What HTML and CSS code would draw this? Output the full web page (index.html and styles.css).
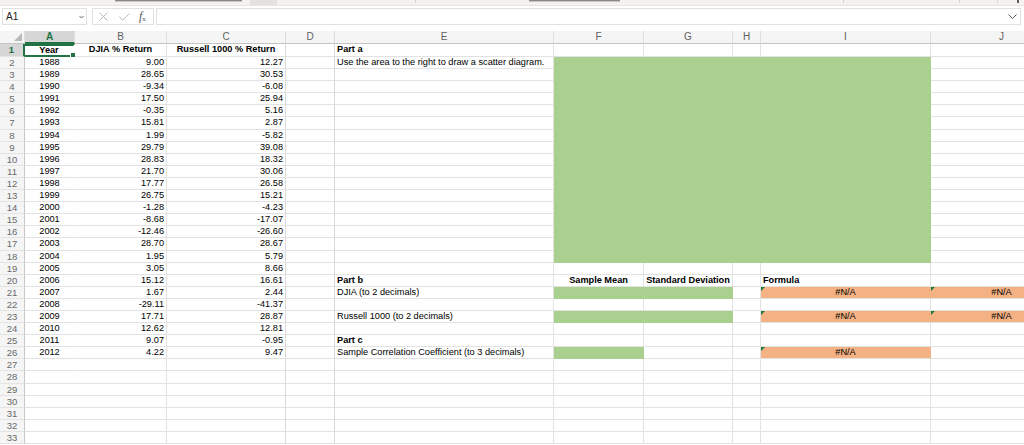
FILE: index.html
```html
<!doctype html>
<html>
<head>
<title>Book1</title>
<meta name=viewport content="width=device-width, initial-scale=1">
<link rel="stylesheet" href="styles.css">
</head>
<body>

<div class="edge">
    <span class="thumb t1"></span>
    <span class="tab"></span>
    <span class="sep s1"></span>
    <span class="thumb t2"></span>
    <span class="sep s2"></span>
    <span class="sep s3"></span>
    <span class="sep s4"></span>
    <span class="mark"></span>
</div>

<div class="fbar">
    <div class="namebox">A1
        <svg width="5" height="4" viewBox="0 0 5 4"><path d="M0.5 1 L2.5 3 L4.5 1" fill="none" stroke="#555" stroke-width="0.9"/></svg>
    </div>
    <div class="tools">
        <svg class="x" width="9" height="9" viewBox="0 0 9 9"><path d="M0.5 0.5 L8.5 8.5 M8.5 0.5 L0.5 8.5" stroke="#b3b3b3" stroke-width="0.9"/></svg>
        <svg class="ok" width="11" height="8" viewBox="0 0 11 8"><path d="M0.5 3.5 L3.5 7.3 L10.5 0.5" fill="none" stroke="#b3b3b3" stroke-width="0.9"/></svg>
        <span class="fx"><i>f</i><sub>x</sub></span>
    </div>
    <div class="finput">
        <svg width="9" height="5" viewBox="0 0 9 5"><path d="M0.5 0.5 L4.5 4.5 L8.5 0.5" fill="none" stroke="#444" stroke-width="0.9"/></svg>
    </div>
</div>

<div class="sheet">
<div class="row hdr"><div class="corner"><span></span></div><div class="sel">A</div><div>B</div><div>C</div><div>D</div><div>E</div><div>F</div><div>G</div><div>H</div><div>I</div><div>J</div></div>
<div class="row r1"><div class="rh sel">1</div><div class="c b a1">Year</div><div class="c b">DJIA % Return</div><div class="c b">Russell 1000 % Return</div><div></div><div class="b">Part a</div><div></div><div></div><div></div><div></div><div></div></div>
<div class="row"><div class="rh">2</div><div class="c">1988</div><div class="n">9.00</div><div class="n">12.27</div><div></div><div>Use the area to the right to draw a scatter diagram.</div><div class="g"></div><div class="g"></div><div class="g"></div><div class="g"></div><div></div></div>
<div class="row"><div class="rh">3</div><div class="c">1989</div><div class="n">28.65</div><div class="n">30.53</div><div></div><div></div><div class="g"></div><div class="g"></div><div class="g"></div><div class="g"></div><div></div></div>
<div class="row"><div class="rh">4</div><div class="c">1990</div><div class="n">-9.34</div><div class="n">-6.08</div><div></div><div></div><div class="g"></div><div class="g"></div><div class="g"></div><div class="g"></div><div></div></div>
<div class="row"><div class="rh">5</div><div class="c">1991</div><div class="n">17.50</div><div class="n">25.94</div><div></div><div></div><div class="g"></div><div class="g"></div><div class="g"></div><div class="g"></div><div></div></div>
<div class="row"><div class="rh">6</div><div class="c">1992</div><div class="n">-0.35</div><div class="n">5.16</div><div></div><div></div><div class="g"></div><div class="g"></div><div class="g"></div><div class="g"></div><div></div></div>
<div class="row"><div class="rh">7</div><div class="c">1993</div><div class="n">15.81</div><div class="n">2.87</div><div></div><div></div><div class="g"></div><div class="g"></div><div class="g"></div><div class="g"></div><div></div></div>
<div class="row"><div class="rh">8</div><div class="c">1994</div><div class="n">1.99</div><div class="n">-5.82</div><div></div><div></div><div class="g"></div><div class="g"></div><div class="g"></div><div class="g"></div><div></div></div>
<div class="row"><div class="rh">9</div><div class="c">1995</div><div class="n">29.79</div><div class="n">39.08</div><div></div><div></div><div class="g"></div><div class="g"></div><div class="g"></div><div class="g"></div><div></div></div>
<div class="row"><div class="rh">10</div><div class="c">1996</div><div class="n">28.83</div><div class="n">18.32</div><div></div><div></div><div class="g"></div><div class="g"></div><div class="g"></div><div class="g"></div><div></div></div>
<div class="row"><div class="rh">11</div><div class="c">1997</div><div class="n">21.70</div><div class="n">30.06</div><div></div><div></div><div class="g"></div><div class="g"></div><div class="g"></div><div class="g"></div><div></div></div>
<div class="row"><div class="rh">12</div><div class="c">1998</div><div class="n">17.77</div><div class="n">26.58</div><div></div><div></div><div class="g"></div><div class="g"></div><div class="g"></div><div class="g"></div><div></div></div>
<div class="row"><div class="rh">13</div><div class="c">1999</div><div class="n">26.75</div><div class="n">15.21</div><div></div><div></div><div class="g"></div><div class="g"></div><div class="g"></div><div class="g"></div><div></div></div>
<div class="row"><div class="rh">14</div><div class="c">2000</div><div class="n">-1.28</div><div class="n">-4.23</div><div></div><div></div><div class="g"></div><div class="g"></div><div class="g"></div><div class="g"></div><div></div></div>
<div class="row"><div class="rh">15</div><div class="c">2001</div><div class="n">-8.68</div><div class="n">-17.07</div><div></div><div></div><div class="g"></div><div class="g"></div><div class="g"></div><div class="g"></div><div></div></div>
<div class="row"><div class="rh">16</div><div class="c">2002</div><div class="n">-12.46</div><div class="n">-26.60</div><div></div><div></div><div class="g"></div><div class="g"></div><div class="g"></div><div class="g"></div><div></div></div>
<div class="row"><div class="rh">17</div><div class="c">2003</div><div class="n">28.70</div><div class="n">28.67</div><div></div><div></div><div class="g"></div><div class="g"></div><div class="g"></div><div class="g"></div><div></div></div>
<div class="row"><div class="rh">18</div><div class="c">2004</div><div class="n">1.95</div><div class="n">5.79</div><div></div><div></div><div class="g"></div><div class="g"></div><div class="g"></div><div class="g"></div><div></div></div>
<div class="row"><div class="rh">19</div><div class="c">2005</div><div class="n">3.05</div><div class="n">8.66</div><div></div><div></div><div></div><div></div><div></div><div></div><div></div></div>
<div class="row"><div class="rh">20</div><div class="c">2006</div><div class="n">15.12</div><div class="n">16.61</div><div></div><div class="b">Part b</div><div class="c b">Sample Mean</div><div class="c b">Standard Deviation</div><div></div><div class="b">Formula</div><div></div></div>
<div class="row"><div class="rh">21</div><div class="c">2007</div><div class="n">1.67</div><div class="n">2.44</div><div></div><div>DJIA (to 2 decimals)</div><div class="g"></div><div class="g"></div><div></div><div class="c o">#N/A</div><div class="c o">#N/A</div></div>
<div class="row"><div class="rh">22</div><div class="c">2008</div><div class="n">-29.11</div><div class="n">-41.37</div><div></div><div></div><div></div><div></div><div></div><div></div><div></div></div>
<div class="row"><div class="rh">23</div><div class="c">2009</div><div class="n">17.71</div><div class="n">28.87</div><div></div><div>Russell 1000 (to 2 decimals)</div><div class="g"></div><div class="g"></div><div></div><div class="c o">#N/A</div><div class="c o">#N/A</div></div>
<div class="row"><div class="rh">24</div><div class="c">2010</div><div class="n">12.62</div><div class="n">12.81</div><div></div><div></div><div></div><div></div><div></div><div></div><div></div></div>
<div class="row"><div class="rh">25</div><div class="c">2011</div><div class="n">9.07</div><div class="n">-0.95</div><div></div><div class="b">Part c</div><div></div><div></div><div></div><div></div><div></div></div>
<div class="row"><div class="rh">26</div><div class="c">2012</div><div class="n">4.22</div><div class="n">9.47</div><div></div><div>Sample Correlation Coefficient (to 3 decimals)</div><div class="g"></div><div></div><div></div><div class="c o">#N/A</div><div></div></div>
<div class="row"><div class="rh">27</div><div></div><div></div><div></div><div></div><div></div><div></div><div></div><div></div><div></div><div></div></div>
<div class="row"><div class="rh">28</div><div></div><div></div><div></div><div></div><div></div><div></div><div></div><div></div><div></div><div></div></div>
<div class="row"><div class="rh">29</div><div></div><div></div><div></div><div></div><div></div><div></div><div></div><div></div><div></div><div></div></div>
<div class="row"><div class="rh">30</div><div></div><div></div><div></div><div></div><div></div><div></div><div></div><div></div><div></div><div></div></div>
<div class="row"><div class="rh">31</div><div></div><div></div><div></div><div></div><div></div><div></div><div></div><div></div><div></div><div></div></div>
<div class="row"><div class="rh">32</div><div></div><div></div><div></div><div></div><div></div><div></div><div></div><div></div><div></div><div></div></div>
<div class="row"><div class="rh">33</div><div></div><div></div><div></div><div></div><div></div><div></div><div></div><div></div><div></div><div></div></div>
</div>

</body>
</html>
```

FILE: styles.css
```css
* {
    box-sizing: border-box;
}
body {
    margin: 0;
    width: 1024px;
    height: 445px;
    overflow: hidden;
    background-color: white;
    color: black;
    font-family: "Liberation Sans", Arial, sans-serif;
}

/* ribbon edge */
.edge {
    display: flex;
    align-items: flex-start;
    height: 6px;
    background-color: #f3f2f1;
    border-bottom: 1px solid #e7e6e5;
}
.thumb {
    height: 2px;
    background-color: #8a8886;
    border-bottom: 1px solid #c8c6c4;
}
.t1 { margin-left: 115px; width: 127px; }
.t2 { margin-left: 113px; width: 91px; }
.tab {
    margin-left: 8px;
    width: 27px;
    height: 5px;
    background-color: #e4e2e0;
}
.sep {
    width: 1px;
    height: 3px;
    background-color: #d2d0ce;
}
.s1 { margin-left: 138px; }
.s2 { margin-left: 223px; }
.s3 { margin-left: 115px; }
.s4 { margin-left: 37px; }
.mark {
    margin-left: 19px;
    width: 2px;
    height: 3px;
    background-color: #605e5c;
}

/* formula bar */
.fbar {
    display: flex;
    height: 25px;
    padding: 2px 3px 6px 2px;
}
.namebox {
    width: 85px;
    border: 1px solid #e1e1e1;
    display: flex;
    align-items: center;
    justify-content: space-between;
    padding: 0 2px 0 3px;
    font-size: 10px;
    color: #222;
}
.tools {
    width: 62px;
    margin-left: 5px;
    border: 1px solid #e1e1e1;
    display: flex;
    align-items: center;
    padding-left: 6px;
}
.tools .ok { margin-left: 11px; }
.fx {
    margin-left: 9px;
    font-family: "Liberation Serif", serif;
    font-size: 12px;
    color: #555;
}
.fx sub {
    font-size: 7px;
    vertical-align: -1px;
}
.finput {
    flex: 1;
    margin-left: 2px;
    border: 1px solid #e1e1e1;
    display: flex;
    align-items: center;
    justify-content: flex-end;
    padding-right: 3px;
}

/* grid */
.sheet {
    width: 1024px;
    overflow: hidden;
}
.row {
    display: grid;
    grid-template-columns: 25px 50px 92px 119px 49px 219px 90px 89px 28px 170px 142px;
    width: 1073px;
    height: 12.1px;
}
.row.hdr, .row.r1 {
    height: 13px;
}
.row > div {
    border-right: 1px solid #e2e2e2;
    border-bottom: 1px solid #e2e2e2;
    padding: 0 2px;
    font-size: 9.2px;
    line-height: 11px;
    white-space: nowrap;
    position: relative;
}
.row > div:nth-child(2) {
    border-right-color: transparent;
}
.row > div:nth-child(4), .row > div:nth-child(5) {
    border-right-color: #dadada;
}

.hdr > div {
    background-color: #f5f5f5;
    border-right: 1px solid #dedede;
    border-bottom: 1px solid #c4c4c4;
    text-align: center;
    color: #616161;
    font-size: 10px;
    line-height: 12px;
}
.hdr > div:nth-child(2) {
    border-right-color: #dedede;
}
.hdr > .sel {
    background-color: #d6d6d6;
    color: #217346;
    font-weight: bold;
    border-bottom: 2px solid #217346;
    line-height: 11px;
}
.hdr > .corner {
    display: flex;
    justify-content: flex-end;
    align-items: flex-end;
    padding: 0 2px 2px 0;
}
.corner span {
    width: 0;
    height: 0;
    border-left: 8px solid transparent;
    border-bottom: 8px solid #b9b9b9;
}

.row > .rh {
    background-color: #f5f5f5;
    border-right: 1px solid #c8c8c8;
    border-bottom: 1px solid #e4e4e4;
    text-align: center;
    color: #6a6a6a;
    font-size: 9.6px;
}
.row > .rh.sel {
    background-color: #d6d6d6;
    color: #217346;
    font-weight: bold;
    border-right: 2px solid #217346;
}

.c { text-align: center; }
.n { text-align: right; }
.b { font-weight: bold; }

.row > .a1 {
    border: 2px solid #217346;
    border-left: 0;
    line-height: 9px;
}
.a1::after {
    content: "";
    position: absolute;
    right: -3px;
    bottom: -3px;
    width: 4px;
    height: 4px;
    background-color: #217346;
    border: 1px solid white;
}

.row > .g {
    background-color: #a9d08e;
    border-color: #a9d08e;
}
.row > .o {
    background-color: #f4b183;
    border-right-color: #f4b183;
}
.o::before {
    content: "";
    position: absolute;
    left: 0;
    top: 0;
    border-top: 4px solid #1f7a3e;
    border-right: 4px solid transparent;
}
```
